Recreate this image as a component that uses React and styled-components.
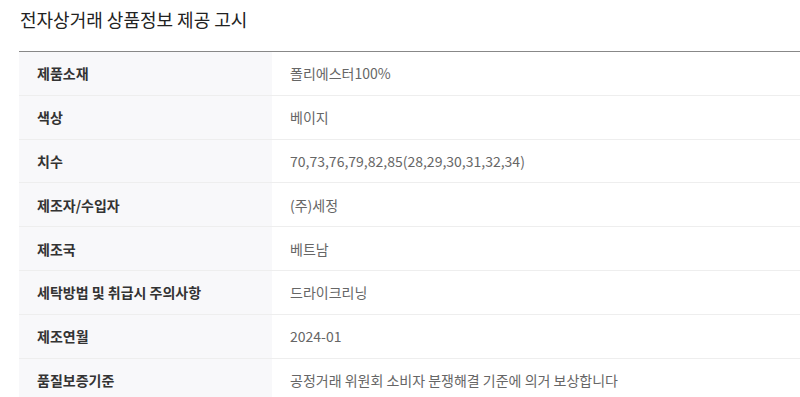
import styled, { createGlobalStyle } from "styled-components";

const rows = [
    ["제품소재", "폴리에스터100%"],
    ["색상", "베이지"],
    ["치수", "70,73,76,79,82,85(28,29,30,31,32,34)"],
    ["제조자/수입자", "(주)세정"],
    ["제조국", "베트남"],
    ["세탁방법 및 취급시 주의사항", "드라이크리닝"],
    ["제조연월", "2024-01"],
    ["품질보증기준", "공정거래 위원회 소비자 분쟁해결 기준에 의거 보상합니다"],
];

export default function App(){
    return(
        <>
        <Global />
        <Page>
            <Title>전자상거래 상품정보 제공 고시</Title>
            <Table>
                {rows.map(([label, value]) => (
                    <Row key={label}>
                        <Label>{label}</Label>
                        <Value>{value}</Value>
                    </Row>
                ))}
            </Table>
        </Page>
        </>
    )
}

const Global = createGlobalStyle`
    *{
        box-sizing: border-box;
    }
    body{
        margin: 0;
        background: #fff;
        font-family: "Noto Sans CJK KR", "Noto Sans", sans-serif;
    }
`

const Page = styled.div`
    padding-left: 19px;
    height: 397px;
    overflow: hidden;
`

const Title = styled.h2`
    margin: 0;
    padding: 7px 0 0 1px;
    height: 51px;
    font-size: 18px;
    font-weight: 400;
    line-height: 24px;
    color: #222;
`

const Table = styled.div`
    border-top: 1px solid #888;
`

const Row = styled.div`
    display: flex;
    height: 43.8px;
    border-bottom: 1px solid #eee;
    font-size: 14px;
`

const Label = styled.div`
    width: 253px;
    flex-shrink: 0;
    background-color: #f8f8fa;
    padding-left: 18px;
    display: flex;
    align-items: center;
    font-weight: 700;
    color: #333;
`

const Value = styled.div`
    padding-left: 18px;
    display: flex;
    align-items: center;
    color: #666;
`
